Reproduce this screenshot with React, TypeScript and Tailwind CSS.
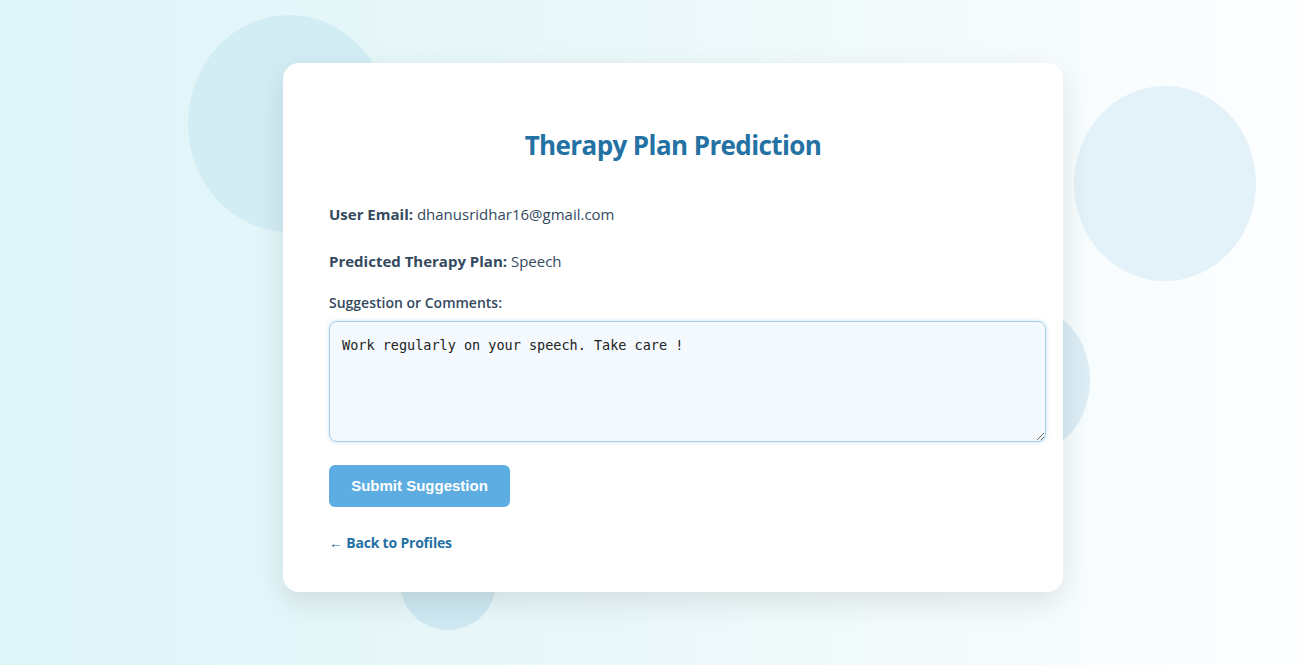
import React from "react";

const App = () => {
  return (
    <div className="relative min-h-[665px] w-full overflow-hidden bg-gradient-to-r from-[#def4f8] via-[#ebf8fa] to-[#fdfeff] font-['Open_Sans',sans-serif]">
      {/* decorative bubbles */}
      <div className="absolute left-[188px] top-[15px] h-[217px] w-[202px] rounded-[50%] bg-[#d3edf5]" />
      <div className="absolute left-[1074px] top-[86px] h-[195px] w-[182px] rounded-[50%] bg-[#e3f1f8]" />
      <div className="absolute left-[960px] top-[305px] h-[150px] w-[130px] rounded-[50%] bg-[#dcedf5]" />
      <div className="absolute left-[400px] top-[534px] h-[96px] w-[96px] rounded-[50%] bg-[#cfe8f1]" />

      <div className="relative flex pl-[283px] pt-[63px] pb-[74px]">
        <div className="flex w-[780px] flex-col items-start rounded-2xl bg-white pl-[46px] pr-[18px] pt-[64px] pb-[39px] shadow-[0_10px_30px_rgba(0,0,0,0.1)]">
          <h2 className="w-full pr-[28px] text-center text-[26px] font-bold leading-[36px] tracking-[-0.6px] text-[#2471a3]">
            Therapy Plan Prediction
          </h2>

          <p className="mt-[40px] text-[15px] leading-[22px] text-[#34495e]">
            <span className="font-bold">User Email:</span> dhanusridhar16@gmail.com
          </p>
          <p className="mt-[25px] text-[15px] leading-[22px] text-[#34495e]">
            <span className="font-bold">Predicted Therapy Plan:</span> Speech
          </p>

          <label className="mt-[21px] block text-[14px] font-semibold leading-[20px] text-[#34495e]">
            Suggestion or Comments:
          </label>
          <textarea
            className="mt-[8px] block h-[121px] w-[717px] resize-y rounded-[8px] border border-[#a9cfe6] bg-[#f4f9fe] px-[12px] py-[14px] font-['DejaVu_Sans_Mono',monospace] text-[13.5px] leading-[18px] text-[#222] outline-none shadow-[0_0_4px_rgba(93,173,226,0.35)]"
            defaultValue="Work regularly on your speech. Take care !"
          />

          <button className="mt-[23px] block h-[42px] w-[181px] rounded-[6px] bg-[#5dade2] font-['Liberation_Sans',sans-serif] text-[15px] font-bold text-white">
            Submit Suggestion
          </button>

          <a className="mt-[26px] block text-[14px] font-bold leading-[20px] tracking-[-0.2px] text-[#2471a3]" href="#">
            ← Back to Profiles
          </a>
        </div>
      </div>
    </div>
  );
};

export default App;
